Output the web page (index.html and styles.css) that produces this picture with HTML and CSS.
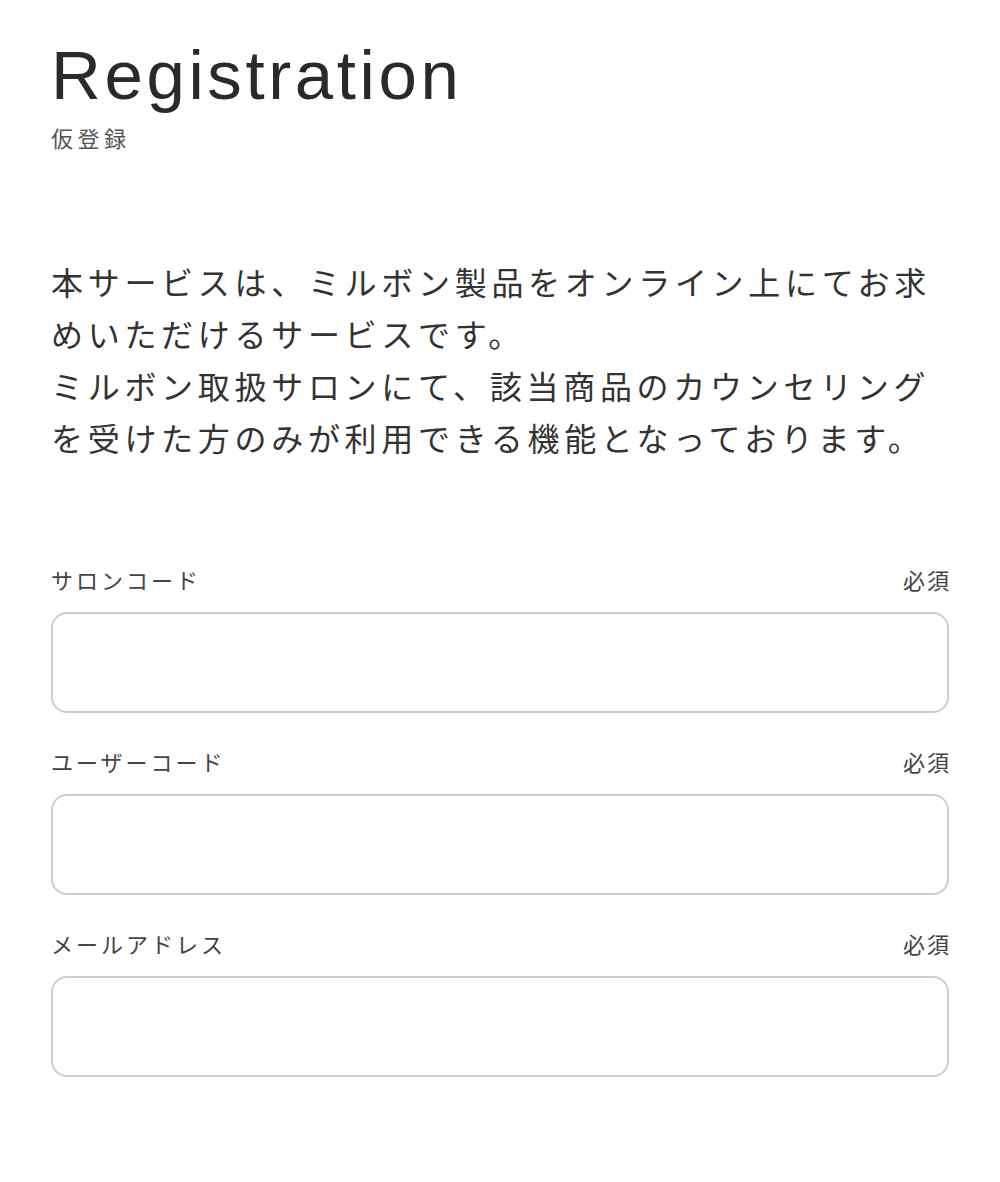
FILE: index.html
```html
<!DOCTYPE html>
<html lang="ja">
<head>
<meta charset="utf-8">
<title>Registration</title>
<link rel="stylesheet" href="styles.css">
</head>
<body>
<main class="page">
  <header class="heading">
    <h1 class="title">Registration</h1>
    <p class="subtitle">仮登録</p>
  </header>
  <p class="intro">本サービスは、ミルボン製品をオンライン上にてお求<br>めいただけるサービスです。<br>ミルボン取扱サロンにて、該当商品のカウンセリング<br>を受けた方のみが利用できる機能となっております。</p>
  <form class="form">
    <div class="field">
      <div class="field-head"><label class="label" for="salon">サロンコード</label><span class="req">必須</span></div>
      <input class="input" id="salon" type="text">
    </div>
    <div class="field">
      <div class="field-head"><label class="label" for="user">ユーザーコード</label><span class="req">必須</span></div>
      <input class="input" id="user" type="text">
    </div>
    <div class="field">
      <div class="field-head"><label class="label" for="mail">メールアドレス</label><span class="req">必須</span></div>
      <input class="input" id="mail" type="email">
    </div>
  </form>
</main>
</body>
</html>
```
FILE: styles.css
```css
html, body {
  margin: 0;
  padding: 0;
  background: #ffffff;
}
body {
  font-family: "Liberation Sans", "Noto Sans CJK JP", sans-serif;
  color: #333333;
}
.page {
  padding: 36px 51px 0 51px;
}
.heading {
  margin: 0;
}
.title {
  margin: 0;
  font-family: "Liberation Sans", sans-serif;
  font-weight: 400;
  font-size: 69px;
  line-height: 80px;
  letter-spacing: 3.6px;
  color: #2a2a2a;
}
.subtitle {
  margin: 6px 0 0 0;
  font-family: "Noto Sans CJK JP", sans-serif;
  font-size: 22px;
  line-height: 30px;
  letter-spacing: 4.5px;
  color: #555555;
}
.intro {
  margin: 103px 0 0 0;
  font-family: "Noto Sans CJK JP", sans-serif;
  font-size: 32px;
  line-height: 52px;
  letter-spacing: 4.7px;
  color: #333333;
  white-space: nowrap;
}
.form {
  margin-top: 101px;
}
.field {
  margin-bottom: 33px;
}
.field-head {
  display: flex;
  justify-content: space-between;
  align-items: center;
  margin-bottom: 18px;
  font-family: "Noto Sans CJK JP", sans-serif;
  font-size: 22px;
  line-height: 30px;
  color: #444444;
}
.label {
  letter-spacing: 3px;
}
.req {
  letter-spacing: 2px;
  margin-right: -2px;
}
.input {
  display: block;
  box-sizing: border-box;
  width: 100%;
  height: 101px;
  margin: 0;
  border: 2px solid #cdcdcd;
  border-radius: 16px;
  background: #ffffff;
  outline: none;
  padding: 0 20px;
  font-size: 24px;
}
```
